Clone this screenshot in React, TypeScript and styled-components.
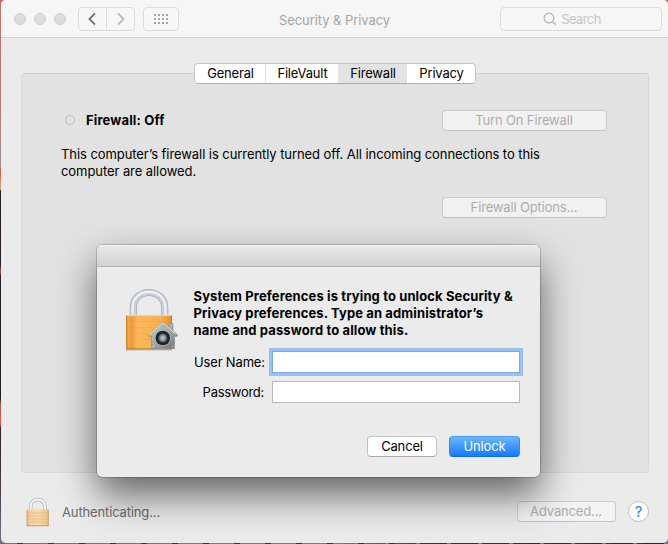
import React from "react";
import styled, { createGlobalStyle } from "styled-components";

const Global = createGlobalStyle`
  * { box-sizing: border-box; }
  html, body { margin: 0; height: 100%; overflow: hidden; }
  body { font: 13px/17px Inter, "Liberation Sans", sans-serif; color: #000; background: #33292c; }
  button { font: inherit; padding: 0; margin: 0; }
`;

const Desktop = styled.div`
  width: 668px;
  height: 544px;
  padding-left: 1px;
  overflow: hidden;
  position: relative;
  background:
    repeating-linear-gradient(90deg, transparent 0 13px, #71798a 13px 17px, #52272b 17px 23px, transparent 23px 31px) 0 100% / 100% 1px no-repeat,
    linear-gradient(90deg, #a45c50 0%, #b4684b 50%, #303343 65%, #252634 100%) 0 100% / 100% 1px no-repeat,
    linear-gradient(#c66d64 0, #b87972 90px, #a48a8e 168px, #d84a2c 169px, #d9a982 189px, #281d29 191px, #30202a 265px, #b2573c 272px, #281d29 276px, #251b26 398px, #bd5b49 405px, #db5b44 425px, #2e202c 428px, #4d3b4b 490px, #71798a 544px);
`;

const Window = styled.main`
  width: 667px;
  height: 543px;
  display: flex;
  flex-direction: column;
  background: #ebebeb;
  border-radius: 5px;
  overflow: hidden;
`;

const Toolbar = styled.header`
  height: 38px;
  flex: none;
  display: grid;
  grid-template-columns: 1fr auto 1fr;
  align-items: center;
  padding: 0 6px 0 13px;
  background: #f6f6f6;
  border-bottom: 1px solid #d1d1d1;
`;

const ToolGroup = styled.div<{ $end?: boolean }>`
  display: flex;
  align-items: center;
  justify-content: ${(p) => (p.$end ? "flex-end" : "flex-start")};
`;

const Lights = styled.div`
  display: flex;
  gap: 8px;
  margin-right: 12px;
`;

const Light = styled.span`
  width: 12px;
  height: 12px;
  border-radius: 50%;
  background: #dcdcdc;
  border: 1px solid #cfcfcf;
`;

const ToolButton = styled.button<{ $w: number; $side?: "left" | "right" }>`
  width: ${(p) => p.$w}px;
  height: 24px;
  display: flex;
  align-items: center;
  justify-content: center;
  background: #f7f7f7;
  border: 1px solid #dcdcdc;
  padding-right: ${(p) => (p.$side === "left" ? 2 : 0)}px;
  border-radius: ${(p) => (p.$side === "left" ? "4px 0 0 4px" : p.$side === "right" ? "0 4px 4px 0" : "4px")};
  margin-right: ${(p) => (p.$side === "left" ? -1 : p.$side === "right" ? 8 : 0)}px;
`;

const Title = styled.h1`
  margin: 3px 7px 0 0;
  font-size: 13px;
  font-weight: 400;
  letter-spacing: -0.07px;
  color: #a5a5a5;
`;

const SearchField = styled.div`
  width: 162px;
  height: 24px;
  display: flex;
  align-items: center;
  justify-content: center;
  gap: 4px;
  padding: 1px 18px 0 0;
  border: 1px solid #dcdcdc;
  border-radius: 4px;
  background: #f7f7f7;
  color: #c6c6c6;
  letter-spacing: -0.6px;
`;

const Body = styled.section`
  display: flex;
  flex-direction: column;
  flex: 1;
  padding: 25px 19px 0 20px;
`;

const Tabs = styled.nav`
  display: flex;
  align-self: center;
  position: relative;
  z-index: 1;
  width: 282px;
  height: 21px;
  margin-bottom: -11px;
  border: 1px solid #c4c4c4;
  border-bottom-color: #acacac;
  border-radius: 4.5px;
  background: #fff;
  overflow: hidden;
`;

const Tab = styled.button<{ $w: number; $active?: boolean; $rule?: boolean }>`
  width: ${(p) => p.$w}px;
  padding-left: 1px;
  border: 0;
  border-right: ${(p) => (p.$rule ? "1px solid #dedede" : "0")};
  background: ${(p) => (p.$active ? "#e3e3e3" : "#fff")};
  color: #000;
  letter-spacing: -0.18px;
  line-height: 19px;
`;

const Panel = styled.section`
  height: 400px;
  border: 1px solid #d9d9d9;
  border-top-color: #d0d0d0;
  border-radius: 4px;
  background: #e2e2e2;
  padding: 36px 41px 0 39px;
`;

const StatusRow = styled.div`
  display: flex;
  align-items: center;
  height: 21px;
`;

const StatusDot = styled.span`
  width: 10px;
  height: 10px;
  margin: -1px 11px 0 4px;
  border: 1px solid #bdbdbd;
  border-radius: 50%;
`;

const StatusText = styled.strong`
  flex: 1;
  font-weight: 700;
  letter-spacing: 0.15px;
`;

const Description = styled.p`
  margin: 15px 0 17px;
  letter-spacing: -0.07px;
  white-space: nowrap;
`;

const PushButton = styled.button<{ $w: number; $kind?: "primary" | "normal" }>`
  width: ${(p) => p.$w}px;
  height: 21px;
  padding-right: ${(p) => (p.$kind ? 0 : 1)}px;
  border: 1px solid;
  border-color: ${(p) => (p.$kind === "primary" ? "#4ba0f4 #3289f5 #0c6bf0" : p.$kind ? "#c6c6c6 #c0c0c0 #aaa" : "#cbcbcb #cbcbcb #c2c2c2")};
  border-radius: 4px;
  background: ${(p) => (p.$kind === "primary" ? "linear-gradient(#6db5fa, #147bfd)" : p.$kind ? "#fff" : "rgba(246,246,246,.75)")};
  color: ${(p) => (p.$kind === "primary" ? "#fff" : p.$kind ? "#000" : "#adadad")};
  line-height: 19px;
  letter-spacing: -0.15px;
`;

const OptionsRow = styled.div`
  display: flex;
  justify-content: flex-end;
`;

const Footer = styled.footer`
  display: flex;
  align-items: center;
  height: 70px;
  padding: 7px 0 0 4px;
`;

const FooterText = styled.span`
  flex: 1;
  margin-left: 12px;
  padding-top: 1px;
  color: #6c6c6c;
  letter-spacing: -0.14px;
`;

const HelpButton = styled.button`
  width: 21px;
  height: 21px;
  margin-left: 12px;
  border: 1px solid #bdbdbd;
  border-radius: 50%;
  background: #fff;
  color: #1484fd;
  font-size: 15px;
  line-height: 19px;
`;

const Dialog = styled.div`
  position: absolute;
  left: 97px;
  top: 245px;
  width: 443px;
  height: 232px;
  border-radius: 5px;
  background: #ebebeb;
  overflow: hidden;
  box-shadow: 0 0 0 0.5px rgba(0, 0, 0, 0.35), 0 18px 38px rgba(0, 0, 0, 0.58);
`;

const DialogBar = styled.div`
  height: 22px;
  background: linear-gradient(#e8e8e8, #d2d2d2);
  border-top: 1px solid #f4f4f4;
  border-bottom: 1px solid #b1b1b1;
`;

const DialogBody = styled.div`
  display: flex;
  padding: 21px 20px 0 26px;
  gap: 17px;
`;

const Message = styled.p`
  margin: 0 0 12px 0.5px;
  font-weight: 700;
  letter-spacing: 0.12px;
  white-space: nowrap;
`;

const Form = styled.form`
  flex: 1;
  min-width: 0;
`;

const Field = styled.label<{ $track: number }>`
  display: grid;
  grid-template-columns: 70px 248px;
  justify-content: end;
  column-gap: 8px;
  align-items: center;
  text-align: right;
  height: 22px;
  margin-bottom: 8px;
  letter-spacing: ${(p) => p.$track}px;
  white-space: nowrap;
`;

const Input = styled.input<{ $focused?: boolean }>`
  width: 248px;
  height: 22px;
  border: 1px solid ${(p) => (p.$focused ? "#7ba9df" : "#b9b9b9")};
  outline: none;
  background: #fff;
  border-radius: 0;
  box-shadow: ${(p) => (p.$focused ? "0 0 0 3px #96c1f2" : "none")};
`;

const Actions = styled.div`
  display: flex;
  justify-content: flex-end;
  gap: 12px;
  margin-top: 33px;
`;

const LockArt = styled.svg`
  flex: none;
  display: block;
`;

const DialogLock = () => (
  <LockArt width="53" height="64" viewBox="123 288 53 64" overflow="visible">
    <defs>
      <linearGradient id="brass" x1="0" x2="1">
        <stop offset="0" stopColor="#c87b24" />
        <stop offset=".05" stopColor="#f3a94b" />
        <stop offset=".12" stopColor="#e99a3a" />
        <stop offset=".25" stopColor="#fbb75b" />
        <stop offset=".75" stopColor="#faae4d" />
        <stop offset=".95" stopColor="#e99636" />
        <stop offset="1" stopColor="#c67822" />
      </linearGradient>
      <linearGradient id="house" x1="0" y1="0" x2="1" y2="1">
        <stop offset="0" stopColor="#c5cbcd" />
        <stop offset=".5" stopColor="#a4acae" />
        <stop offset="1" stopColor="#697174" />
      </linearGradient>
      <radialGradient id="dial">
        <stop offset="0" stopColor="#ccd0d2" />
        <stop offset=".5" stopColor="#9a9ea1" />
        <stop offset="1" stopColor="#4a4e51" />
      </radialGradient>
    </defs>
    <path d="M133.3 316v-8.3c0-20.3 31.4-20.3 31.4 0v8.3" fill="none" stroke="#a9afb8" strokeWidth="7.2" />
    <path d="M133.3 316v-8.3c0-20.3 31.4-20.3 31.4 0v8.3" fill="none" stroke="#c8ced7" strokeWidth="5.6" />
    <path d="M132.6 316v-8.3c0-21 32.8-21 32.8 0v8.3" fill="none" stroke="#eef0f4" strokeWidth="2.2" />
    <rect x="126" y="349" width="46" height="1.5" fill="#8b8b8b" opacity=".45" />
    <rect x="126" y="315" width="46" height="34.5" rx="1.3" fill="url(#brass)" />
    <path d="M126.7 315.6h44.6" stroke="#ffd28a" strokeWidth="1" />
    <path d="M127 321.5h44M127 327.5h44M127 333.5h44M127 339.5h44" stroke="#d98b30" strokeWidth=".6" opacity=".2" />
    <path d="M126.5 348.9h45" stroke="#bf752a" strokeWidth="1" />
    <path d="M163 322l6 5.2v-3.8h4v7.4l4.7 4.2-1 1.6-2.2-.3v12.2h-23v-12.2l-2.2.3-.8-1.6z" fill="url(#house)" stroke="#868e91" strokeWidth=".6" />
    <path d="M149.4 334.6L163 322.8l12.5 11.3" fill="none" stroke="#dce1e3" strokeWidth="1" />
    <circle cx="162.8" cy="338" r="7.9" fill="#b6bdc0" />
    <circle cx="162.8" cy="338" r="7.3" fill="#222426" />
    <circle cx="162.8" cy="338" r="4.6" fill="url(#dial)" />
    <circle cx="153.5" cy="346.5" r=".5" fill="#eee" />
    <circle cx="172.5" cy="346.5" r=".5" fill="#eee" />
  </LockArt>
);

const FooterLock = () => (
  <LockArt width="25" height="30" viewBox="25 493 25 30">
    <defs>
      <linearGradient id="pale" x1="0" x2="1">
        <stop offset="0" stopColor="#c79e69" />
        <stop offset=".1" stopColor="#f2cd98" />
        <stop offset=".5" stopColor="#f9d9a9" />
        <stop offset=".92" stopColor="#efc78e" />
        <stop offset="1" stopColor="#c59761" />
      </linearGradient>
    </defs>
    <path d="M30.7 506v-3.4c0-9.2 14.2-9.2 14.2 0v3.4" fill="none" stroke="#b6bac0" strokeWidth="3.7" />
    <path d="M30.7 506v-3.4c0-9.2 14.2-9.2 14.2 0v3.4" fill="none" stroke="#eef1f5" strokeWidth="2.2" />
    <rect x="26.5" y="505.5" width="22.3" height="16.6" rx="1" fill="url(#pale)" />
    <path d="M27 509h21M27 512h21M27 515h21M27 518h21" stroke="#d7ae77" strokeWidth=".7" opacity=".6" />
    <path d="M26.8 521.8h21.8" stroke="#b98e5d" strokeWidth=".8" />
  </LockArt>
);

const Chevron = ({ d, color }: { d: string; color: string }) => (
  <svg width="8" height="14" viewBox="0 0 8 14">
    <path d={d} fill="none" stroke={color} strokeWidth="1.8" />
  </svg>
);

const GridIcon = () => (
  <svg width="14" height="10" viewBox="0 0 14 10">
    {[0, 4, 8].map((y) => [0, 4, 8, 12].map((x) => <rect key={`${x}-${y}`} x={x} y={y} width="2" height="2" fill="#a6a6a6" />))}
  </svg>
);

const SearchIcon = () => (
  <svg width="14" height="14" viewBox="0 0 14 14">
    <circle cx="6" cy="6" r="4.9" fill="none" stroke="#adadad" strokeWidth="1.1" />
    <path d="M9.5 9.5l3.5 3.4" stroke="#adadad" strokeWidth="1.2" />
  </svg>
);

export default function App() {
  return (
    <Desktop>
      <Global />
      <Window>
        <Toolbar>
          <ToolGroup>
            <Lights>
              <Light />
              <Light />
              <Light />
            </Lights>
            <ToolButton $w={29} $side="left" aria-label="Back">
              <Chevron d="M7 1.3L1.4 7 7 12.7" color="#707070" />
            </ToolButton>
            <ToolButton $w={29} $side="right" aria-label="Forward">
              <Chevron d="M1 1.3L6.6 7 1 12.7" color="#bababa" />
            </ToolButton>
            <ToolButton $w={36} aria-label="Show all">
              <GridIcon />
            </ToolButton>
          </ToolGroup>
          <Title>Security &amp; Privacy</Title>
          <ToolGroup $end>
            <SearchField>
              <SearchIcon />
              Search
            </SearchField>
          </ToolGroup>
        </Toolbar>
        <Body>
          <Tabs>
            <Tab $w={71} $rule>General</Tab>
            <Tab $w={72}>FileVault</Tab>
            <Tab $w={69} $active>Firewall</Tab>
            <Tab $w={68}>Privacy</Tab>
          </Tabs>
          <Panel>
            <StatusRow>
              <StatusDot />
              <StatusText>Firewall: Off</StatusText>
              <PushButton $w={165}>Turn On Firewall</PushButton>
            </StatusRow>
            <Description>
              This computer’s firewall is currently turned off. All incoming connections to this
              <br />
              computer are allowed.
            </Description>
            <OptionsRow>
              <PushButton $w={165}>Firewall Options...</PushButton>
            </OptionsRow>
          </Panel>
          <Footer>
            <FooterLock />
            <FooterText>Authenticating...</FooterText>
            <PushButton $w={99}>Advanced...</PushButton>
            <HelpButton>?</HelpButton>
          </Footer>
        </Body>
      </Window>
      <Dialog role="dialog">
        <DialogBar />
        <DialogBody>
          <DialogLock />
          <Form>
            <Message>
              System Preferences is trying to unlock Security &amp;
              <br />
              Privacy preferences. Type an administrator’s
              <br />
              name and password to allow this.
            </Message>
            <Field $track={-0.16}>
              User Name:
              <Input $focused />
            </Field>
            <Field $track={-0.28}>
              Password:
              <Input type="password" />
            </Field>
            <Actions>
              <PushButton type="button" $w={70} $kind="normal">Cancel</PushButton>
              <PushButton type="button" $w={71} $kind="primary">Unlock</PushButton>
            </Actions>
          </Form>
        </DialogBody>
      </Dialog>
    </Desktop>
  );
}
